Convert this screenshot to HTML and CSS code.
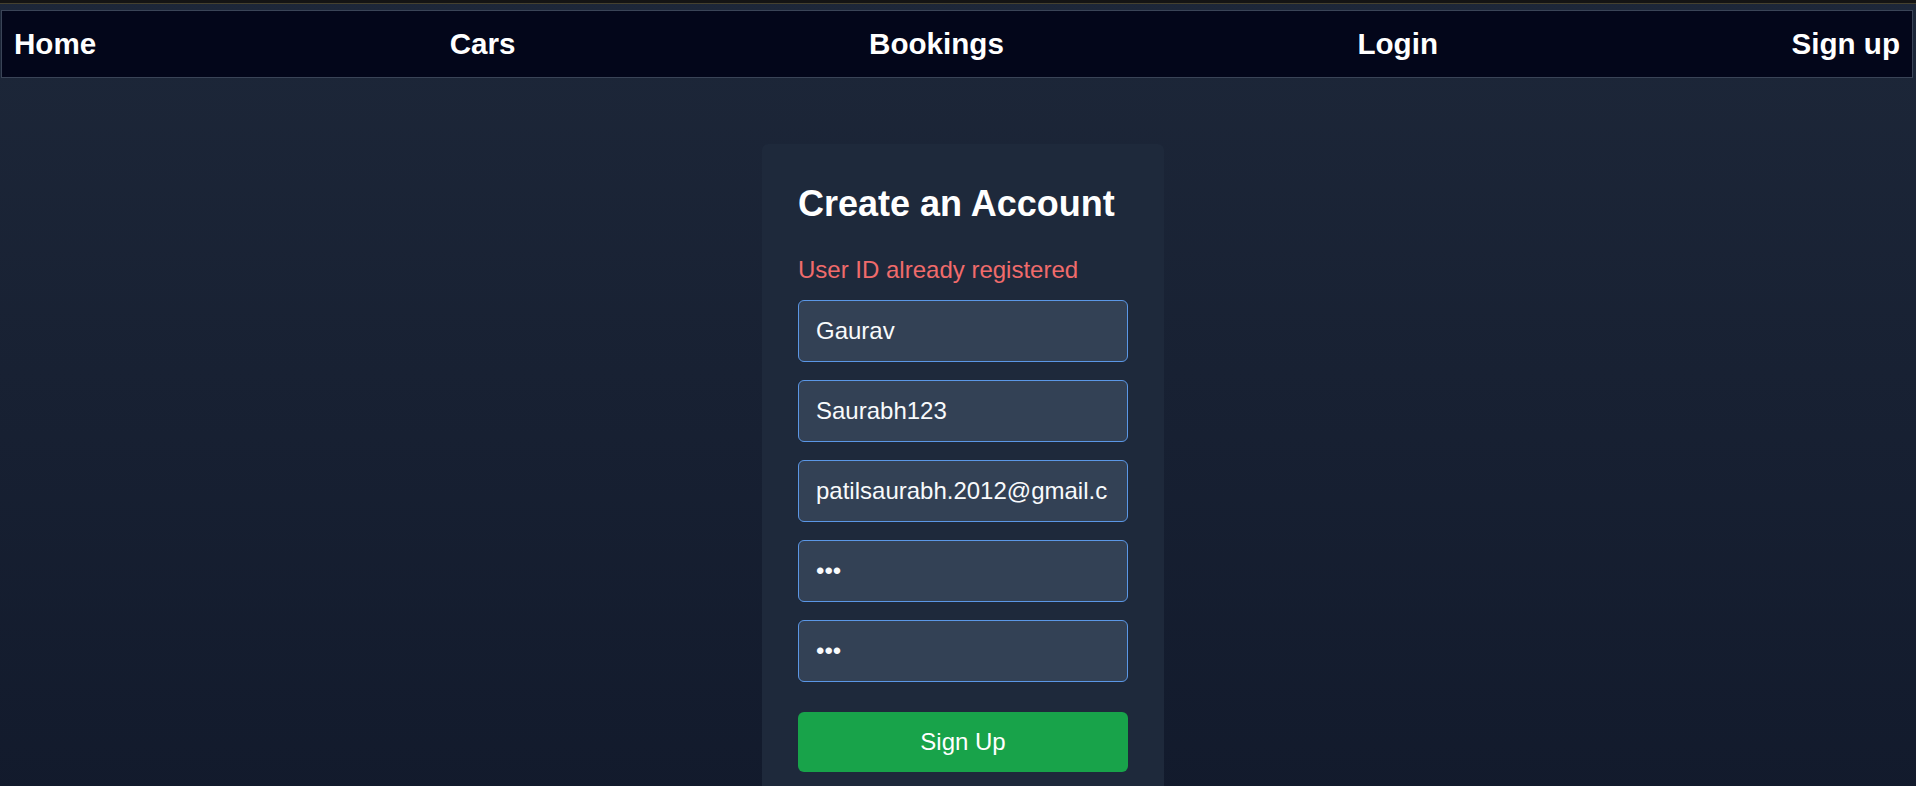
FILE: index.html
```html
<!DOCTYPE html>
<html lang="en">
<head>
<meta charset="utf-8">
<title>Sign up</title>
<link rel="stylesheet" href="styles.css">
</head>
<body>
<div class="topbar"></div>
<nav class="nav">
  <a class="nav-link" href="#">Home</a>
  <a class="nav-link" href="#">Cars</a>
  <a class="nav-link" href="#">Bookings</a>
  <a class="nav-link" href="#">Login</a>
  <a class="nav-link" href="#">Sign up</a>
</nav>
<main class="main">
  <form class="card">
    <h2 class="card-title">Create an Account</h2>
    <p class="error">User ID already registered</p>
    <input class="field" type="text" value="Gaurav">
    <input class="field" type="text" value="Saurabh123">
    <input class="field" type="email" value="patilsaurabh.2012@gmail.com">
    <input class="field" type="password" value="123">
    <input class="field" type="password" value="123">
    <button class="submit" type="button">Sign Up</button>
  </form>
</main>
</body>
</html>
```
FILE: styles.css
```css
html, body {
  margin: 0;
  padding: 0;
}
body {
  min-height: 100vh;
  background: linear-gradient(to bottom, #1d2739 0%, #121a2c 100%);
  font-family: "Liberation Sans", Arial, sans-serif;
  color: #ffffff;
  overflow: hidden;
}
.topbar {
  height: 3px;
  background: #141414;
  border-bottom: 1px solid #45412f;
}
.nav {
  margin: 6px 3px 0 1px;
  height: 66px;
  border: 1px solid #3a4457;
  background: #03061a;
  display: flex;
  align-items: center;
  justify-content: space-between;
  padding: 0 12px;
}
.nav-link {
  color: #ffffff;
  text-decoration: none;
  font-weight: 700;
  font-size: 29.6px;
  line-height: 34px;
}
.main {
  display: flex;
  justify-content: center;
  padding: 66px 0 0 10px;
}
.card {
  width: 402px;
  box-sizing: border-box;
  background: #1e293b;
  border-radius: 6px;
  padding: 39px 36px 36px;
  display: flex;
  flex-direction: column;
  gap: 18px;
}
.card-title {
  margin: 0 0 14px;
  font-size: 36px;
  line-height: 41px;
  font-weight: 700;
  color: #ffffff;
}
.error {
  margin: 0 0 -2px;
  font-size: 24px;
  line-height: 28px;
  color: #f06b6b;
}
.field {
  display: block;
  width: 100%;
  box-sizing: border-box;
  margin: 0;
  padding: 16px 19px 16px 17px;
  font-family: "Liberation Sans", Arial, sans-serif;
  font-size: 24px;
  line-height: 28px;
  height: 62px;
  color: #f8fafc;
  background: #334155;
  border: 1px solid #5b97e6;
  border-radius: 6px;
  outline: none;
}
.submit {
  margin-top: 12px;
  height: 60px;
  border: none;
  border-radius: 6px;
  background: #18a34a;
  color: #ffffff;
  font-family: "Liberation Sans", Arial, sans-serif;
  font-size: 24px;
  line-height: 28px;
  cursor: pointer;
}
```
